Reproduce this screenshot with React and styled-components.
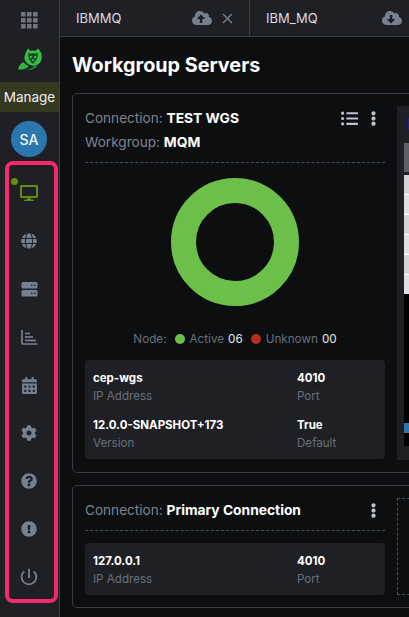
import React from "react";
import styled, { createGlobalStyle } from "styled-components";
import {
  FaDesktop,
  FaGlobe,
  FaCalendarAlt,
  FaCog,
  FaQuestionCircle,
  FaExclamationCircle,
  FaCloudUploadAlt,
  FaCloudDownloadAlt,
  FaListUl,
  FaEllipsisV,
} from "react-icons/fa";
import { MdClose, MdPowerSettingsNew } from "react-icons/md";

const GlobalStyle = createGlobalStyle`
  html, body {
    margin: 0;
    height: 100%;
    background: #0d0e10;
    overflow: hidden;
  }
  * {
    box-sizing: border-box;
  }
  body {
    font-family: "Inter", "Liberation Sans", sans-serif;
  }
`;

const Shell = styled.div`
  display: flex;
  width: 409px;
  height: 617px;
  overflow: hidden;
`;

const Sidebar = styled.aside`
  flex: 0 0 60px;
  display: flex;
  flex-direction: column;
  align-items: stretch;
  background: #1f2025;
  border-right: 1px solid #3a3d43;
`;

const AppsButton = styled.div`
  height: 36px;
  padding-top: 5px;
  display: flex;
  align-items: center;
  justify-content: center;
  color: #6f7680;
`;

const LogoWrap = styled.div`
  height: 46px;
  display: flex;
  align-items: center;
  justify-content: center;
`;

const ManageLabel = styled.div`
  height: 30px;
  background: #34391f;
  color: #eef0f2;
  font-size: 13.5px;
  display: flex;
  align-items: center;
  justify-content: center;
`;

const Avatar = styled.div`
  width: 36px;
  height: 36px;
  margin: 9px 0 0 11px;
  border-radius: 50%;
  background: #2b77ad;
  color: #f2f5f8;
  font-size: 14px;
  font-weight: 500;
  display: flex;
  align-items: center;
  justify-content: center;
`;

const NavBox = styled.nav`
  position: relative;
  width: 53px;
  height: 442px;
  margin: 4px 0 0 5px;
  padding: 15px 5px 9px 0;
  border: 4px solid #f5296c;
  border-radius: 8px;
  display: flex;
  flex-direction: column;
  align-items: center;
  justify-content: space-between;
`;

const NavItem = styled.div`
  height: 26px;
  width: 26px;
  display: flex;
  align-items: center;
  justify-content: center;
  color: ${(p) => (p.$active ? "#5f8f0d" : "#76808f")};
  font-size: ${(p) => p.$size || 16}px;
`;

const ActiveDot = styled.span`
  position: absolute;
  top: 13px;
  left: 2px;
  width: 7px;
  height: 7px;
  border-radius: 50%;
  background: #5f8f0d;
`;

const Main = styled.main`
  flex: 1;
  min-width: 0;
  display: flex;
  flex-direction: column;
`;

const TabBar = styled.div`
  height: 37px;
  flex: none;
  display: flex;
  background: #1f2025;
  border-bottom: 1px solid #3a3f47;
`;

const Tab = styled.div`
  flex: 0 0 ${(p) => p.$width}px;
  display: flex;
  align-items: center;
  padding: 0 ${(p) => (p.$last ? 7 : 13)}px 0 16px;
  border-right: ${(p) => (p.$last ? "none" : "1px solid #3a3f47")};
  color: #d9dce0;
  font-size: 13px;
`;

const TabName = styled.span`
  flex: 1;
`;

const TabIcon = styled.span`
  display: flex;
  color: #76808f;
  font-size: ${(p) => p.$size || 20}px;
  margin-left: ${(p) => p.$gap || 0}px;
`;

const Content = styled.div`
  padding: 16px 0 0 12px;
  width: 640px;
`;

const Title = styled.h1`
  margin: 0 0 16px;
  font-size: 19.8px;
  line-height: 24px;
  font-weight: 700;
  color: #fff;
`;

const Card = styled.section`
  display: flex;
  gap: 12px;
  padding: 12px;
  margin-bottom: 12px;
  border: 1px solid #3a3c40;
  border-radius: 5px;
`;

const CardMain = styled.div`
  flex: 0 0 300px;
`;

const CardHead = styled.div`
  display: flex;
  justify-content: space-between;
  align-items: flex-start;
  padding-bottom: 8px;
  border-bottom: 1px dashed #4b4e53;
`;

const HeadLine = styled.div`
  font-size: 13.6px;
  line-height: 24px;
  color: #7d8590;
`;

const Strong = styled.b`
  color: #fff;
  font-weight: 700;
  font-size: 13.8px;
`;

const HeadIcons = styled.div`
  display: flex;
  align-items: center;
  gap: 8px;
  height: 24px;
  padding-right: 4px;
  color: #b9c4d0;
  font-size: 15px;
`;

const ListIcon = styled(FaListUl)`
  font-size: 17px;
`;

const DonutWrap = styled.div`
  display: flex;
  justify-content: center;
  padding-top: 15px;
`;

const Legend = styled.div`
  display: flex;
  align-items: center;
  justify-content: center;
  margin: 25px 0 13px;
  font-size: 11.7px;
  line-height: 16px;
  color: #68707b;
`;

const LegendDot = styled.span`
  width: 10px;
  height: 10px;
  border-radius: 50%;
  margin: 0 5px 0 8px;
  background: ${(p) => p.$color};
`;

const LegendCount = styled.span`
  color: #e8eaec;
  margin-left: 4px;
`;

const InfoPanel = styled.div`
  display: grid;
  grid-template-columns: 204px 1fr;
  row-gap: 11px;
  margin-top: ${(p) => p.$top || 0}px;
  padding: 9px 8px 7px;
  background: #1f2025;
  border-radius: 4px;
`;

const Value = styled.div`
  font-size: 11.5px;
  line-height: 18px;
  font-weight: 700;
  color: #fff;
`;

const Caption = styled.div`
  font-size: 11.6px;
  line-height: 18px;
  color: #68707b;
`;

const SidePanel = styled.div`
  flex: 1;
  height: 354px;
  padding: 12px 0 0 7px;
  background: #1f2025;
`;

const SideInner = styled.div`
  display: flex;
  flex-direction: column;
`;

const SideAccent = styled.div`
  width: 6px;
  height: 12px;
  margin: 0 0 13px 4px;
  background: #221c86;
`;

const SideHeader = styled.div`
  height: 29px;
  background: #5b5f66;
  margin-bottom: 3px;
`;

const SideRows = styled.div`
  display: flex;
  flex-direction: column;
  gap: 1px;
  background: #fff;
`;

const SideRow = styled.div`
  height: 19px;
  background: ${(p) => (p.$even ? "#e0e0e6" : "#d4d5d8")};
`;

const SideBlack = styled.div`
  height: 152px;
  background: #000;
  display: flex;
  flex-direction: column;
  justify-content: flex-end;
`;

const SideBar = styled.div`
  height: 10px;
  margin-bottom: 13px;
  background: #2b77ad;
  border-bottom: 1px solid #6a6e75;
`;

const DashedPanel = styled.div`
  flex: 1;
  height: 97px;
  border: 1px dashed #4b4e53;
`;

function AppsIcon() {
  const cells = [0, 6, 12];
  return (
    <svg width="17" height="17" viewBox="0 0 17 17" fill="currentColor" aria-hidden="true">
      {cells.map((y) =>
        cells.map((x) => <rect key={`${x}-${y}`} x={x} y={y} width="4.6" height="4.6" rx="0.6" />)
      )}
    </svg>
  );
}

function OwlLogo() {
  return (
    <svg width="24" height="23" viewBox="0 0 24 23" aria-hidden="true">
      {/* wing feathers */}
      <path d="M0 21.5c.6-3.6 2.6-6.2 5.6-7.2 1.6 2 3.4 3.2 5.6 3.6-2.6 2.6-6.4 4-11.2 3.6z" fill="#35b53f" />
      <path d="M7.6 21.8c3.6-.2 6.6-1.6 8.6-4 1.4.2 2.4.2 3.4-.2-2.6 3.6-7 5.2-12 4.2z" fill="#1f8a2c" />
      {/* body */}
      <path
        d="M10 .4l2.4 2.6c1.6-.6 3.4-.6 5 0L19.8.4c2.8 2 4.2 5.2 4 8.8-.2 4.2-2.4 7.2-6 8.2-4.4 1.2-9.6-1.4-11-5.600C5.800 8.600 7.600 4.600 10 .4z"
        fill="#37bd43"
      />
      <path
        d="M10.400 4.600l2.200 1.200c1.600-.6 3.200-.6 4.800 0l2.200-1.200c.6 3.400-.2 7.400-3.400 9.800L15 16l-1.600-1.600c-2.800-2.400-3.600-6.400-3-9.800z"
        fill="#1c4a22"
      />
      <circle cx="12.800" cy="9" r="1.100" fill="#43d650" />
      <circle cx="17.200" cy="9" r="1.100" fill="#43d650" />
      <path d="M15 10.400l1 1.800-1 1.200-1-1.200z" fill="#43d650" />
    </svg>
  );
}

function ServerIcon() {
  return (
    <svg width="17" height="15" viewBox="0 0 17 15" aria-hidden="true">
      <rect x="0.500" width="16" height="6.500" rx="1.500" fill="currentColor" />
      <rect x="0.500" y="8" width="16" height="6.500" rx="1.500" fill="currentColor" />
      <rect x="10" y="2.600" width="1.500" height="1.400" fill="#1f2025" />
      <rect x="13" y="2.600" width="1.500" height="1.400" fill="#1f2025" />
      <rect x="10" y="10.600" width="1.500" height="1.400" fill="#1f2025" />
      <rect x="13" y="10.600" width="1.500" height="1.400" fill="#1f2025" />
    </svg>
  );
}

function ChartIcon() {
  return (
    <svg width="17" height="15" viewBox="0 0 17 15" fill="none" stroke="currentColor" strokeWidth="1.700" aria-hidden="true">
      <path d="M1 0v13c0 .6.400 1 1 1h14.500" />
      <path d="M4 3.500h5" />
      <path d="M4 7h8" />
      <path d="M4 10.500h11" />
    </svg>
  );
}

function Donut() {
  return (
    <svg width="128" height="128" viewBox="0 0 128 128" aria-label="Active nodes">
      <circle cx="64" cy="64" r="51.500" fill="none" stroke="#6cc04a" strokeWidth="25" />
    </svg>
  );
}

const navItems = [
  { icon: <FaDesktop />, active: true, size: 18 },
  { icon: <FaGlobe /> },
  { icon: <ServerIcon /> },
  { icon: <ChartIcon /> },
  { icon: <FaCalendarAlt />, size: 17 },
  { icon: <FaCog /> },
  { icon: <FaQuestionCircle /> },
  { icon: <FaExclamationCircle /> },
  { icon: <MdPowerSettingsNew />, size: 22 },
];

const sideRows = [0, 1, 2, 3, 4, 5];

export default function App() {
  return (
    <>
      <GlobalStyle />
      <Shell>
        <Sidebar>
          <AppsButton>
            <AppsIcon />
          </AppsButton>
          <LogoWrap>
            <OwlLogo />
          </LogoWrap>
          <ManageLabel>Manage</ManageLabel>
          <Avatar>SA</Avatar>
          <NavBox>
            <ActiveDot />
            {navItems.map((item, i) => (
              <NavItem key={i} $active={item.active} $size={item.size}>
                {item.icon}
              </NavItem>
            ))}
          </NavBox>
        </Sidebar>
        <Main>
          <TabBar>
            <Tab $width={190}>
              <TabName>IBMMQ</TabName>
              <TabIcon>
                <FaCloudUploadAlt />
              </TabIcon>
              <TabIcon $size={17} $gap={7}>
                <MdClose />
              </TabIcon>
            </Tab>
            <Tab $width={159} $last>
              <TabName>IBM_MQ</TabName>
              <TabIcon>
                <FaCloudDownloadAlt />
              </TabIcon>
            </Tab>
          </TabBar>
          <Content>
            <Title>Workgroup Servers</Title>
            <Card>
              <CardMain>
                <CardHead>
                  <div>
                    <HeadLine>
                      Connection: <Strong>TEST WGS</Strong>
                    </HeadLine>
                    <HeadLine>
                      Workgroup: <Strong>MQM</Strong>
                    </HeadLine>
                  </div>
                  <HeadIcons>
                    <ListIcon />
                    <FaEllipsisV />
                  </HeadIcons>
                </CardHead>
                <DonutWrap>
                  <Donut />
                </DonutWrap>
                <Legend>
                  Node:
                  <LegendDot $color="#6cc04a" />
                  Active<LegendCount>06</LegendCount>
                  <LegendDot $color="#b0301c" />
                  Unknown<LegendCount>00</LegendCount>
                </Legend>
                <InfoPanel>
                  <div>
                    <Value>cep-wgs</Value>
                    <Caption>IP Address</Caption>
                  </div>
                  <div>
                    <Value>4010</Value>
                    <Caption>Port</Caption>
                  </div>
                  <div>
                    <Value>12.0.0-SNAPSHOT+173</Value>
                    <Caption>Version</Caption>
                  </div>
                  <div>
                    <Value>True</Value>
                    <Caption>Default</Caption>
                  </div>
                </InfoPanel>
              </CardMain>
              <SidePanel>
                <SideInner>
                  <SideAccent />
                  <SideHeader />
                  <SideRows>
                    {sideRows.map((r) => (
                      <SideRow key={r} $even={r % 2 === 1} />
                    ))}
                  </SideRows>
                  <SideBlack>
                    <SideBar />
                  </SideBlack>
                </SideInner>
              </SidePanel>
            </Card>
            <Card>
              <CardMain>
                <CardHead>
                  <HeadLine>
                    Connection: <Strong>Primary Connection</Strong>
                  </HeadLine>
                  <HeadIcons>
                    <FaEllipsisV />
                  </HeadIcons>
                </CardHead>
                <InfoPanel $top={12}>
                  <div>
                    <Value>127.0.0.1</Value>
                    <Caption>IP Address</Caption>
                  </div>
                  <div>
                    <Value>4010</Value>
                    <Caption>Port</Caption>
                  </div>
                </InfoPanel>
              </CardMain>
              <DashedPanel />
            </Card>
          </Content>
        </Main>
      </Shell>
    </>
  );
}
